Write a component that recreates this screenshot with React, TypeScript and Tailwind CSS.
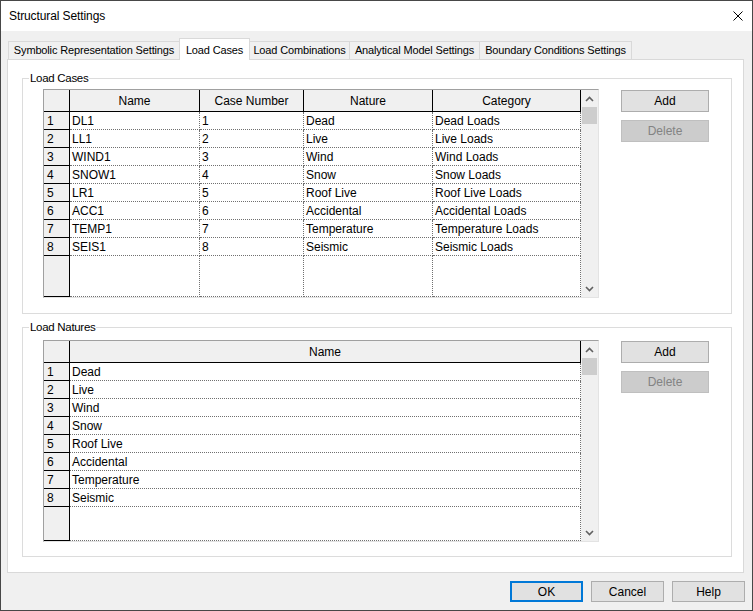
import React from "react";

const cases = [
  ["1", "DL1", "1", "Dead", "Dead Loads"],
  ["2", "LL1", "2", "Live", "Live Loads"],
  ["3", "WIND1", "3", "Wind", "Wind Loads"],
  ["4", "SNOW1", "4", "Snow", "Snow Loads"],
  ["5", "LR1", "5", "Roof Live", "Roof Live Loads"],
  ["6", "ACC1", "6", "Accidental", "Accidental Loads"],
  ["7", "TEMP1", "7", "Temperature", "Temperature Loads"],
  ["8", "SEIS1", "8", "Seismic", "Seismic Loads"],
];

const natures = ["Dead", "Live", "Wind", "Snow", "Roof Live", "Accidental", "Temperature", "Seismic"];

function Chevron({ up }: { up: boolean }) {
  return (
    <svg width="9" height="6" viewBox="0 0 9 6" className="block">
      <polyline
        points={up ? "1,5 4.5,1.5 8,5" : "1,1 4.5,4.5 8,1"}
        fill="none"
        stroke="#606060"
        strokeWidth="1.6"
      />
    </svg>
  );
}

function ScrollBar() {
  return (
    <div className="flex w-[17px] flex-col bg-[#f0f0f0]">
      <div className="flex h-[17px] items-center justify-center">
        <Chevron up />
      </div>
      <div className="mx-[1px] h-[17px] bg-[#cdcdcd]" />
      <div className="flex-1" />
      <div className="flex h-[17px] items-center justify-center">
        <Chevron up={false} />
      </div>
    </div>
  );
}

function HeadCell({ children }: { children?: React.ReactNode }) {
  return (
    <div className="flex items-center justify-center border-r border-b border-black bg-[#f0f0f0] leading-none">
      {children}
    </div>
  );
}

function RowHead({ children }: { children?: React.ReactNode }) {
  return (
    <div className="flex items-center border-r border-b border-black bg-[#f0f0f0] pl-[3px] leading-none">
      {children}
    </div>
  );
}

function Cell({ children }: { children?: React.ReactNode }) {
  return (
    <div className="flex items-center whitespace-nowrap border-r border-b border-dotted border-[#707070] bg-white pl-[2px] leading-none">
      {children}
    </div>
  );
}

function Btn({ children, disabled }: { children: React.ReactNode; disabled?: boolean }) {
  return (
    <div
      className={
        disabled
          ? "flex h-[22px] w-[88px] items-center justify-center border border-[#bfbfbf] bg-[#cccccc] text-[#838383]"
          : "flex h-[22px] w-[88px] items-center justify-center border border-[#adadad] bg-[#e1e1e1] text-black"
      }
    >
      {children}
    </div>
  );
}

function SideButtons() {
  return (
    <div className="ml-[22px] mt-[1px] flex flex-col gap-[8px]">
      <Btn>Add</Btn>
      <Btn disabled>Delete</Btn>
    </div>
  );
}

function TableFrame({ children }: { children: React.ReactNode }) {
  return (
    <div className="flex w-[556px] border border-t-[#a0a0a0] border-l-[#a0a0a0] border-r-[#e3e3e3] border-b-[#e3e3e3]">
      {children}
      <ScrollBar />
    </div>
  );
}

export default function App() {
  return (
    <div className="h-[611px] w-[753px] border border-[#474747] bg-[#f0f0f0] font-['Liberation_Sans',Arial,sans-serif] text-[12px] text-black">
      {/* Title bar */}
      <div className="flex h-[30px] items-center justify-between bg-white pl-[8px] pr-[9px]">
        <span className="tracking-[-0.1px]">Structural Settings</span>
        <svg width="10" height="10" viewBox="0 0 10 10" className="block">
          <path d="M0.5 0.5 L9.5 9.5 M9.5 0.5 L0.5 9.5" stroke="#000" strokeWidth="1" fill="none" />
        </svg>
      </div>

      <div className="flex flex-col pl-[6px] pt-[7px]">
        {/* Tabs */}
        <div className="ml-[1px] flex items-end text-[11px] tracking-[-0.15px]">
          <div className="flex h-[18px] w-[171px] items-center justify-center border-t border-l border-[#d9d9d9] bg-[#f0f0f0] whitespace-nowrap">
            Symbolic Representation Settings
          </div>
          <div className="relative z-10 -mb-px flex h-[22px] w-[71px] items-start justify-center border-t border-l border-r border-[#d9d9d9] bg-white pt-[3px] whitespace-nowrap">
            Load Cases
          </div>
          <div className="flex h-[18px] w-[99px] items-center justify-center border-t border-[#d9d9d9] bg-[#f0f0f0] whitespace-nowrap">
            Load Combinations
          </div>
          <div className="flex h-[18px] w-[130px] items-center justify-center border-t border-l border-[#d9d9d9] bg-[#f0f0f0] whitespace-nowrap">
            Analytical Model Settings
          </div>
          <div className="flex h-[18px] w-[153px] items-center justify-center border-t border-l border-r border-[#d9d9d9] bg-[#f0f0f0] whitespace-nowrap">
            Boundary Conditions Settings
          </div>
        </div>

        {/* Tab panel */}
        <div className="flex h-[514px] w-[737px] flex-col border border-[#d9d9d9] bg-white pl-[14px] pt-[10px]">
          <fieldset className="w-[710px] border border-[#dcdcdc]">
            <legend className="ml-[6px] px-[1px] text-[11.5px] leading-[16px] tracking-[-0.3px]">Load Cases</legend>
            <div className="flex items-start pb-[15px] pl-[20px] pt-[3px]">
              <TableFrame>
                <div className="grid grid-cols-[26px_130px_104px_129px_148px] grid-rows-[22px_repeat(8,18px)_41px]">
                  <HeadCell />
                  <HeadCell>Name</HeadCell>
                  <HeadCell>Case Number</HeadCell>
                  <HeadCell>Nature</HeadCell>
                  <HeadCell>Category</HeadCell>
                  {cases.map((r) => (
                    <React.Fragment key={r[0]}>
                      <RowHead>{r[0]}</RowHead>
                      <Cell>{r[1]}</Cell>
                      <Cell>{r[2]}</Cell>
                      <Cell>{r[3]}</Cell>
                      <Cell>{r[4]}</Cell>
                    </React.Fragment>
                  ))}
                  <RowHead />
                  <Cell />
                  <Cell />
                  <Cell />
                  <Cell />
                </div>
              </TableFrame>
              <SideButtons />
            </div>
          </fieldset>

          <fieldset className="mt-[5px] w-[710px] border border-[#dcdcdc]">
            <legend className="ml-[6px] px-[1px] text-[11.5px] leading-[16px] tracking-[-0.3px]">Load Natures</legend>
            <div className="flex items-start pb-[14px] pl-[20px] pt-[5px]">
              <TableFrame>
                <div className="grid grid-cols-[26px_511px] grid-rows-[22px_repeat(8,18px)_34px]">
                  <HeadCell />
                  <HeadCell>Name</HeadCell>
                  {natures.map((n, i) => (
                    <React.Fragment key={n}>
                      <RowHead>{i + 1}</RowHead>
                      <Cell>{n}</Cell>
                    </React.Fragment>
                  ))}
                  <RowHead />
                  <Cell />
                </div>
              </TableFrame>
              <SideButtons />
            </div>
          </fieldset>
        </div>

        {/* Dialog buttons */}
        <div className="mt-[8px] flex justify-end gap-[8px] pr-[7px]">
          <div className="flex h-[21px] w-[73px] items-center justify-center border-2 border-[#0078d7] bg-[#e1e1e1]">
            OK
          </div>
          <div className="flex h-[21px] w-[73px] items-center justify-center border border-[#adadad] bg-[#e1e1e1]">
            Cancel
          </div>
          <div className="flex h-[21px] w-[73px] items-center justify-center border border-[#adadad] bg-[#e1e1e1]">
            Help
          </div>
        </div>
      </div>
    </div>
  );
}
